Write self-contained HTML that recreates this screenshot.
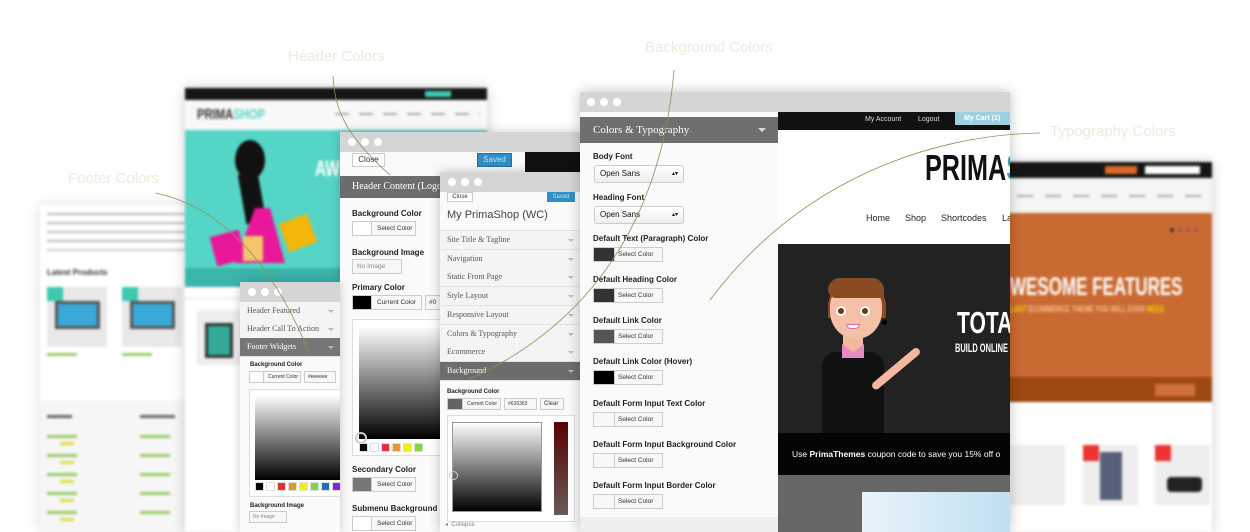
<!DOCTYPE html>
<html><head><meta charset="utf-8">
<style>
*{margin:0;padding:0;box-sizing:border-box}
body{width:1250px;height:532px;overflow:hidden;background:#fff;position:relative;font-family:"Liberation Sans",sans-serif}
.a{position:absolute}
.blur{filter:blur(1.2px)}
.tb{background:#d5d5d5}
.dot{position:absolute;width:8px;height:8px;border-radius:50%;background:#fff}
.ser{font-family:"Liberation Serif",serif}
.lbl{position:absolute;font-size:8px;font-weight:bold;color:#222;white-space:nowrap}
.btn{position:absolute;height:15px;border:1px solid #ccc;background:#f7f7f7;font-size:6.5px;color:#333;line-height:13px;white-space:nowrap;overflow:hidden}
.btn .sw{position:absolute;left:0;top:0;bottom:0;width:19px;border-right:1px solid #ccc}
.btn span{position:absolute;left:24px}
.item{position:absolute;left:0;right:0;height:19px;border-bottom:1px solid #e2e2e2;background:#f4f4f4;font-family:"Liberation Serif",serif;font-size:8px;color:#555;line-height:18px;padding-left:7px;white-space:nowrap}
.item:after{content:"";position:absolute;right:6px;top:8px;border:3px solid transparent;border-top-color:#bbb}
.ann{position:absolute;color:#ebebdf;font-size:15px;font-family:"Liberation Sans",sans-serif;white-space:nowrap}
.grad{background:linear-gradient(to bottom,#fff,#000)}
.sws div{display:inline-block;width:9px;height:9px;margin-right:2px;border:1px solid #ddd}
.cond{font-family:"Liberation Sans",sans-serif;font-weight:bold;white-space:nowrap;transform-origin:left top;line-height:1}
</style></head><body>

<div class="ann" style="left:288px;top:48px">Header Colors</div>
<div class="ann" style="left:645px;top:39px">Background Colors</div>
<div class="ann" style="left:68px;top:170px">Footer Colors</div>
<div class="ann" style="left:1050px;top:123px">Typography Colors</div>

<div class="a blur" style="left:40px;top:205px;width:150px;height:327px;background:#fff;box-shadow:0 0 12px rgba(0,0,0,.15)">
 <div class="a" style="left:7px;top:8px;width:140px;height:2px;background:#bbb;box-shadow:0 9px #bbb,0 18px #bbb,0 27px #bbb,0 36px #ccc"></div>
 <div class="a" style="left:7px;top:63px;font-size:8px;font-weight:bold;color:#333">Latest Products</div>
 <div class="a" style="left:7px;top:82px;width:60px;height:60px;background:#e8e8e8"></div>
 <div class="a" style="left:82px;top:82px;width:60px;height:60px;background:#e8e8e8"></div>
 <div class="a" style="left:15px;top:96px;width:45px;height:28px;background:#3aa8d8;border:3px solid #555"></div>
 <div class="a" style="left:90px;top:96px;width:45px;height:28px;background:#3aa8d8;border:3px solid #555"></div>
 <div class="a" style="left:7px;top:82px;width:16px;height:14px;background:#3cc9b0"></div>
 <div class="a" style="left:82px;top:82px;width:16px;height:14px;background:#3cc9b0"></div>
 <div class="a" style="left:7px;top:148px;width:30px;height:3px;background:#9c6"></div>
 <div class="a" style="left:82px;top:148px;width:30px;height:3px;background:#9c6"></div>
 <div class="a" style="left:0;top:195px;width:150px;height:132px;background:#f6f6f6"></div>
 <div class="a" style="left:7px;top:210px;width:25px;height:3px;background:#666"></div>
 <div class="a" style="left:100px;top:210px;width:35px;height:3px;background:#666"></div>
 <div class="a" style="left:7px;top:230px;width:30px;height:3px;background:#9c6;box-shadow:0 19px #9c6,0 38px #9c6,0 57px #9c6,0 76px #9c6"></div>
 <div class="a" style="left:100px;top:230px;width:30px;height:3px;background:#9c6;box-shadow:0 19px #9c6,0 38px #9c6,0 57px #9c6,0 76px #9c6"></div>
 <div class="a" style="left:20px;top:237px;width:14px;height:3px;background:#dd4;box-shadow:0 19px #dd4,0 38px #dd4,0 57px #dd4,0 76px #dd4"></div>
</div>

<div class="a blur" style="left:185px;top:88px;width:302px;height:444px;background:#fff;box-shadow:0 0 12px rgba(0,0,0,.2)">
 <div class="a" style="left:0;top:0;width:302px;height:12px;background:#151515"></div>
 <div class="a" style="left:240px;top:3px;width:26px;height:6px;background:#3cc9b0"></div>
 <div class="a" style="left:0;top:12px;width:302px;height:30px;background:#f8f8f8"></div>
 <div class="a cond" style="left:12px;top:19px;font-size:15px;color:#333;transform:scaleX(.75)">PRIMA<span style="color:#55d5c5">SHOP</span></div>
 <div class="a" style="left:150px;top:25px;width:145px;height:2px;background:repeating-linear-gradient(90deg,#aaa 0 14px,transparent 14px 24px)"></div>
 <div class="a" style="left:0;top:42px;width:302px;height:157px;background:#55d5c5"></div>
 <div class="a" style="left:0;top:180px;width:302px;height:19px;background:#3bb4a9"></div>
 <div class="a" style="left:50px;top:52px;width:30px;height:40px;border-radius:50%;background:#111"></div>
 <div class="a" style="left:57px;top:85px;width:20px;height:50px;background:#111;transform:rotate(-10deg)"></div>
 <div class="a" style="left:50px;top:120px;width:50px;height:55px;background:#e9179a;clip-path:polygon(40% 0,70% 0,100% 100%,0 100%)"></div>
 <div class="a" style="left:28px;top:145px;width:30px;height:30px;background:#e9179a;transform:rotate(-15deg)"></div>
 <div class="a" style="left:58px;top:148px;width:20px;height:25px;background:#f5c56b"></div>
 <div class="a" style="left:98px;top:130px;width:30px;height:30px;background:#f2b70a;transform:rotate(-20deg)"></div>
 <div class="a cond" style="left:130px;top:70px;font-size:22px;color:#fff;transform:scaleX(.7)">AW</div>
 <div class="a" style="left:0;top:210px;width:302px;height:1px;background:#ddd"></div>
 <div class="a" style="left:12px;top:222px;width:45px;height:55px;background:#eee"></div>
 <div class="a" style="left:20px;top:235px;width:28px;height:35px;background:#3a9;border:3px solid #333"></div>
</div>

<div class="a blur" style="left:1005px;top:162px;width:207px;height:370px;background:#fff;box-shadow:0 0 12px rgba(0,0,0,.2)">
 <div class="a" style="left:0;top:0;width:207px;height:16px;background:#151515"></div>
 <div class="a" style="left:100px;top:4px;width:32px;height:8px;background:#d96a2a"></div>
 <div class="a" style="left:140px;top:4px;width:55px;height:8px;background:#fff"></div>
 <div class="a" style="left:0;top:16px;width:207px;height:35px;background:#f5f5f5"></div>
 <div class="a" style="left:12px;top:33px;width:185px;height:2px;background:repeating-linear-gradient(90deg,#aaa 0 16px,transparent 16px 28px)"></div>
 <div class="a" style="left:0;top:51px;width:207px;height:189px;background:#c96a32"></div>
 <div class="a" style="left:0;top:215px;width:207px;height:25px;background:#9e4812"></div>
 <div class="a" style="left:150px;top:222px;width:40px;height:12px;background:#d0703a"></div>
 <div class="a cond" style="left:5px;top:113px;font-size:25px;color:#fff;transform:scaleX(.68)">WESOME FEATURES</div>
 <div class="a cond" style="left:5px;top:143px;font-size:9px;color:#f5d400;transform:scaleX(.7)">LAST <span style="color:#f8c090">ECOMMERCE THEME YOU WILL EVER</span> NEED</div>
 <div class="a" style="left:165px;top:66px;width:4px;height:4px;border-radius:50%;background:#333;box-shadow:8px 0 #a55,16px 0 #a55,24px 0 #a55"></div>
 <div class="a" style="left:5px;top:283px;width:55px;height:60px;background:#eee"></div>
 <div class="a" style="left:78px;top:283px;width:55px;height:60px;background:#eee"></div>
 <div class="a" style="left:150px;top:283px;width:55px;height:60px;background:#eee"></div>
 <div class="a" style="left:95px;top:290px;width:22px;height:48px;background:#566078"></div>
 <div class="a" style="left:162px;top:315px;width:35px;height:15px;background:#222;border-radius:4px"></div>
 <div class="a" style="left:78px;top:283px;width:16px;height:16px;background:#e33"></div>
 <div class="a" style="left:150px;top:283px;width:16px;height:16px;background:#e33"></div>
</div>

<div class="a" style="left:340px;top:132px;width:240px;height:400px;background:#fafafa;box-shadow:0 0 10px rgba(0,0,0,.2);overflow:hidden">
 <div class="a tb" style="left:0;top:0;width:240px;height:20px"></div>
 <div class="dot" style="left:8px;top:6px"></div><div class="dot" style="left:21px;top:6px"></div><div class="dot" style="left:34px;top:6px"></div>
 <div class="a" style="left:12px;top:21px;width:33px;height:14px;border:1px solid #ccc;background:#fff;font-size:8px;line-height:12px;text-align:center;color:#333">Close</div>
 <div class="a" style="left:137px;top:21px;width:35px;height:14px;background:#2e8fc9;border:1px solid #1e70a5;font-size:8px;line-height:12px;text-align:center;color:#cde">Saved</div>
 <div class="a" style="left:185px;top:20px;width:55px;height:20px;background:#111"></div>
 <div class="a ser" style="left:0;top:44px;width:240px;height:22px;background:#6d6d6d;color:#fff;font-size:10px;line-height:22px;padding-left:12px">Header Content (Logo)</div>
 <div class="lbl" style="left:12px;top:77px">Background Color</div>
 <div class="btn" style="left:12px;top:89px;width:64px"><div class="sw" style="background:#fff"></div><span>Select Color</span></div>
 <div class="lbl" style="left:12px;top:116px">Background Image</div>
 <div class="btn" style="left:12px;top:127px;width:50px;color:#888"><span style="left:4px">No Image</span></div>
 <div class="lbl" style="left:12px;top:151px">Primary Color</div>
 <div class="btn" style="left:12px;top:163px;width:70px"><div class="sw" style="background:#000"></div><span>Current Color</span></div>
 <div class="btn" style="left:85px;top:163px;width:30px"><span style="left:3px">#0</span></div>
 <div class="a" style="left:12px;top:187px;width:100px;height:137px;border:1px solid #ddd;background:#fff"></div>
 <div class="a grad" style="left:19px;top:194px;width:93px;height:113px"></div>
 <div class="a" style="left:15px;top:300px;width:12px;height:12px;border-radius:50%;border:2px solid #ccc"></div>
 <div class="a sws" style="left:19px;top:307px;white-space:nowrap"><div style="background:#000"></div><div style="background:#fff"></div><div style="background:#dd3333"></div><div style="background:#dd9933"></div><div style="background:#eeee22"></div><div style="background:#81d742"></div></div>
 <div class="lbl" style="left:12px;top:333px">Secondary Color</div>
 <div class="btn" style="left:12px;top:345px;width:64px"><div class="sw" style="background:#777"></div><span>Select Color</span></div>
 <div class="lbl" style="left:12px;top:372px">Submenu Background Color</div>
 <div class="btn" style="left:12px;top:384px;width:64px"><div class="sw" style="background:#fff"></div><span>Select Color</span></div>
</div>

<div class="a" style="left:240px;top:282px;width:100px;height:250px;background:#fafafa;box-shadow:0 0 10px rgba(0,0,0,.2);overflow:hidden">
 <div class="a tb" style="left:0;top:0;width:100px;height:20px"></div>
 <div class="dot" style="left:8px;top:6px"></div><div class="dot" style="left:21px;top:6px"></div><div class="dot" style="left:34px;top:6px"></div>
 <div class="item" style="top:20px">Header Featured</div>
 <div class="item" style="top:38px">Header Call To Action</div>
 <div class="item" style="top:56px;background:#777;color:#fff">Footer Widgets</div>
 <div class="lbl" style="left:10px;top:80px;font-size:6px">Background Color</div>
 <div class="btn" style="left:9px;top:89px;width:52px;height:12px;font-size:5px;line-height:10px"><div class="sw" style="width:14px;background:#fff"></div><span style="left:18px">Current Color</span></div>
 <div class="btn" style="left:64px;top:89px;width:32px;height:12px;font-size:5px;line-height:10px"><span style="left:3px">#eeeeee</span></div>
 <div class="a" style="left:9px;top:107px;width:95px;height:108px;border:1px solid #ddd;background:#fff"></div>
 <div class="a grad" style="left:15px;top:113px;width:90px;height:85px"></div>
 <div class="a sws" style="left:15px;top:200px;white-space:nowrap;font-size:0"><div style="background:#000"></div><div style="background:#fff"></div><div style="background:#dd3333"></div><div style="background:#dd9933"></div><div style="background:#eeee22"></div><div style="background:#81d742"></div><div style="background:#1e73be"></div><div style="background:#8224e3"></div></div>
 <div class="lbl" style="left:10px;top:221px;font-size:6px">Background Image</div>
 <div class="btn" style="left:9px;top:229px;width:38px;height:12px;font-size:5px;line-height:10px;color:#888"><span style="left:3px">No Image</span></div>
</div>

<div class="a" style="left:440px;top:172px;width:140px;height:360px;background:#fafafa;box-shadow:0 0 10px rgba(0,0,0,.25);overflow:hidden">
 <div class="a tb" style="left:0;top:0;width:140px;height:20px"></div>
 <div class="dot" style="left:8px;top:6px"></div><div class="dot" style="left:21px;top:6px"></div><div class="dot" style="left:34px;top:6px"></div>
 <div class="a" style="left:7px;top:20px;width:26px;height:10px;border:1px solid #ccc;background:#fff;font-size:6px;line-height:8px;text-align:center;color:#333">Close</div>
 <div class="a" style="left:107px;top:20px;width:28px;height:10px;background:#2e8fc9;font-size:6px;line-height:10px;text-align:center;color:#cde">Saved</div>
 <div class="a" style="left:0;top:31px;width:140px;height:28px;border-bottom:1px solid #e2e2e2"></div>
 <div class="a" style="left:7px;top:37px;font-size:11px;color:#444;white-space:nowrap">My PrimaShop (WC)</div>
 <div class="item" style="top:59px">Site Title &amp; Tagline</div>
 <div class="item" style="top:78px">Navigation</div>
 <div class="item" style="top:96px">Static Front Page</div>
 <div class="item" style="top:115px">Style Layout</div>
 <div class="item" style="top:134px">Responsive Layout</div>
 <div class="item" style="top:153px">Colors &amp; Typography</div>
 <div class="item" style="top:171px">Ecommerce</div>
 <div class="item" style="top:190px;background:#6d6d6d;color:#fff">Background</div>
 <div class="lbl" style="left:7px;top:217px;font-size:6px">Background Color</div>
 <div class="btn" style="left:7px;top:226px;width:54px;height:12px;font-size:5px;line-height:10px"><div class="sw" style="width:15px;background:#636363"></div><span style="left:19px">Current Color</span></div>
 <div class="btn" style="left:64px;top:226px;width:33px;height:12px;font-size:5px;line-height:10px"><span style="left:3px">#636363</span></div>
 <div class="btn" style="left:100px;top:226px;width:24px;height:12px;font-size:6px;line-height:10px"><span style="left:3px">Clear</span></div>
 <div class="a" style="left:7px;top:243px;width:128px;height:107px;border:1px solid #ddd;background:#fff"></div>
 <div class="a grad" style="left:12px;top:250px;width:90px;height:90px;border:1px solid #999"></div>
 <div class="a" style="left:114px;top:250px;width:14px;height:93px;background:linear-gradient(#5a0000,#6a5a5a)"></div>
 <div class="a" style="left:9px;top:299px;width:9px;height:9px;border-radius:50%;border:1.5px solid #ccc"></div>
 <div class="a" style="left:5px;top:349px;font-size:6px;color:#888">◂&nbsp; Collapse</div>
</div>

<div class="a" style="left:580px;top:92px;width:430px;height:440px;background:#fafafa;box-shadow:0 0 12px rgba(0,0,0,.25);overflow:hidden">
 <div class="a tb" style="left:0;top:0;width:430px;height:20px"></div>
 <div class="dot" style="left:7px;top:6px"></div><div class="dot" style="left:20px;top:6px"></div><div class="dot" style="left:33px;top:6px"></div>
 <div class="a ser" style="left:0;top:25px;width:198px;height:26px;background:#6f6f6f;color:#fff;font-size:11px;line-height:26px;padding-left:13px">Colors &amp; Typography</div>
 <div class="a" style="left:178px;top:36px;border:4px solid transparent;border-top-color:#ddd"></div>
 <div class="lbl" style="left:13px;top:60px">Body Font</div>
 <div class="a" style="left:14px;top:73px;width:90px;height:18px;border:1px solid #ccc;border-radius:3px;background:linear-gradient(#fff,#eee);font-size:8px;line-height:16px;padding-left:5px;color:#111">Open Sans<span style="position:absolute;right:5px;font-size:6px">▴▾</span></div>
 <div class="lbl" style="left:13px;top:101px">Heading Font</div>
 <div class="a" style="left:14px;top:114px;width:90px;height:18px;border:1px solid #ccc;border-radius:3px;background:linear-gradient(#fff,#eee);font-size:8px;line-height:16px;padding-left:5px;color:#111">Open Sans<span style="position:absolute;right:5px;font-size:6px">▴▾</span></div>
 <div class="lbl" style="left:13px;top:142px">Default Text (Paragraph) Color</div>
 <div class="btn" style="left:13px;top:155px;width:70px"><div class="sw" style="width:21px;background:#333"></div><span>Select Color</span></div>
 <div class="lbl" style="left:13px;top:183px">Default Heading Color</div>
 <div class="btn" style="left:13px;top:196px;width:70px"><div class="sw" style="width:21px;background:#333"></div><span>Select Color</span></div>
 <div class="lbl" style="left:13px;top:224px">Default Link Color</div>
 <div class="btn" style="left:13px;top:237px;width:70px"><div class="sw" style="width:21px;background:#555"></div><span>Select Color</span></div>
 <div class="lbl" style="left:13px;top:265px">Default Link Color (Hover)</div>
 <div class="btn" style="left:13px;top:278px;width:70px"><div class="sw" style="width:21px;background:#000"></div><span>Select Color</span></div>
 <div class="lbl" style="left:13px;top:307px">Default Form Input Text Color</div>
 <div class="btn" style="left:13px;top:320px;width:70px"><div class="sw" style="width:21px;background:#f8f8f8"></div><span>Select Color</span></div>
 <div class="lbl" style="left:13px;top:348px">Default Form Input Background Color</div>
 <div class="btn" style="left:13px;top:361px;width:70px"><div class="sw" style="width:21px;background:#f8f8f8"></div><span>Select Color</span></div>
 <div class="lbl" style="left:13px;top:389px">Default Form Input Border Color</div>
 <div class="btn" style="left:13px;top:402px;width:70px"><div class="sw" style="width:21px;background:#f8f8f8"></div><span>Select Color</span></div>
 <div class="a" style="left:0;top:425px;width:198px;height:15px;background:#eee"></div>

 <div class="a" style="left:198px;top:20px;width:232px;height:420px;background:#fff;overflow:hidden">
  <div class="a" style="left:0;top:0;width:232px;height:18px;background:#111"></div>
  <div class="a" style="left:87px;top:4px;font-size:7px;color:#ddd;white-space:nowrap">My Account</div>
  <div class="a" style="left:140px;top:4px;font-size:7px;color:#ddd">Logout</div>
  <div class="a" style="left:177px;top:0;width:55px;height:13px;background:#9fcfe3;font-size:7px;font-weight:bold;color:#fff;line-height:13px;padding-left:9px;white-space:nowrap">My Cart (1)</div>
  <div class="a cond" style="left:147px;top:38px;font-size:36px;color:#111;transform:scaleX(.7)">PRIMA<span style="color:#2a9fc9">S</span></div>
  <div class="a" style="left:88px;top:101px;font-size:9px;color:#222">Home</div>
  <div class="a" style="left:127px;top:101px;font-size:9px;color:#222">Shop</div>
  <div class="a" style="left:163px;top:101px;font-size:9px;color:#222">Shortcodes</div>
  <div class="a" style="left:224px;top:101px;font-size:9px;color:#222">La</div>
  <div class="a" style="left:0;top:132px;width:232px;height:189px;background:#222"></div>
  <div class="a" style="left:44px;top:240px;width:62px;height:81px;background:#111;border-radius:14px 14px 0 0"></div>
  <div class="a" style="left:65px;top:218px;width:20px;height:25px;background:#f2b8a0"></div>
  <div class="a" style="left:64px;top:232px;width:22px;height:14px;background:#e78ac0;clip-path:polygon(0 0,50% 60%,100% 0,100% 100%,0 100%)"></div>
  <div class="a" style="left:95px;top:272px;width:60px;height:8px;background:#f2b8a0;transform:rotate(-40deg);transform-origin:left center;border-radius:4px"></div>
  <div class="a" style="left:50px;top:166px;width:58px;height:40px;background:#8a4a24;border-radius:30px 30px 0 0"></div>
  <div class="a" style="left:52px;top:172px;width:52px;height:55px;background:#f5c0a8;border-radius:40% 40% 50% 50%"></div>
  <div class="a" style="left:50px;top:166px;width:56px;height:20px;background:#8a4a24;border-radius:30px 30px 5px 20px"></div>
  <div class="a" style="left:58px;top:194px;width:10px;height:10px;border-radius:50%;background:#6b3a12;border:2px solid #fff"></div>
  <div class="a" style="left:82px;top:194px;width:10px;height:10px;border-radius:50%;background:#6b3a12;border:2px solid #fff"></div>
  <div class="a" style="left:68px;top:212px;width:14px;height:5px;background:#fff;border:1px solid #e06aa0;border-radius:0 0 8px 8px"></div>
  <div class="a" style="left:104px;top:208px;width:5px;height:5px;border-radius:50%;background:#000"></div>
  <div class="a cond" style="left:179px;top:195px;font-size:31px;color:#fff;transform:scaleX(.68)">TOTA</div>
  <div class="a cond" style="left:177px;top:230px;font-size:12px;color:#fff;transform:scaleX(.62)">BUILD ONLINE</div>
  <div class="a" style="left:0;top:321px;width:232px;height:42px;background:#050505"></div>
  <div class="a" style="left:14px;top:337px;font-size:8.5px;color:#fff;white-space:nowrap">Use <b>PrimaThemes</b> coupon code to save you 15% off o</div>
  <div class="a" style="left:0;top:363px;width:232px;height:57px;background:#666"></div>
  <div class="a" style="left:84px;top:380px;width:148px;height:40px;background:linear-gradient(90deg,#e8f4fb,#bfe0f0)"></div>
 </div>
</div>

<svg class="a" style="left:0;top:0" width="1250" height="532">
 <g fill="none" stroke="#8f8f5a" stroke-width="0.8">
  <path d="M333 76 C335 110 345 135 390 175"/>
  <path d="M155 193 C215 205 270 255 310 355"/>
  <path d="M674 70 C665 180 620 310 470 379"/>
  <path d="M1040 133 C930 135 800 180 710 300"/>
 </g>
</svg>
</body></html>
